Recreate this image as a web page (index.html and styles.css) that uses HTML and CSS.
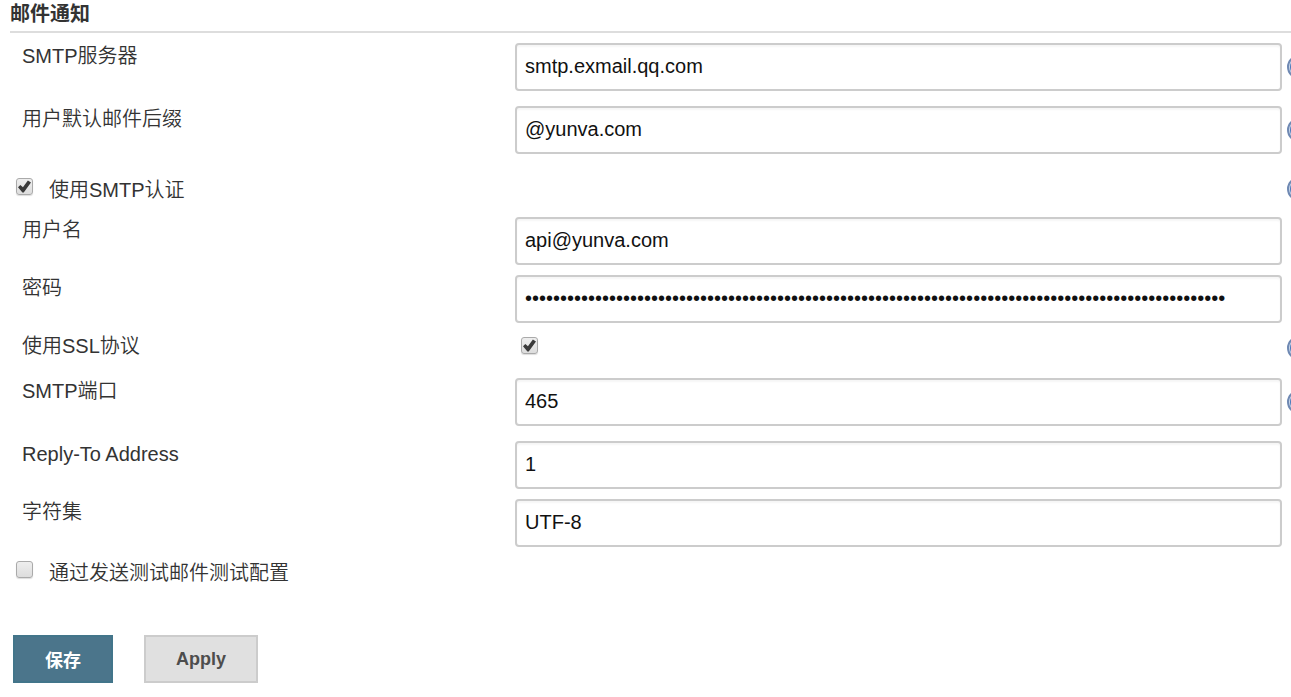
FILE: index.html
```
<!DOCTYPE html>
<html lang="zh-CN">
<head>
<meta charset="utf-8">
<meta name="viewport" content="width=device-width, initial-scale=1">
<title>邮件通知</title>
<link rel="stylesheet" href="styles.css">
</head>
<body>
<svg class="defs" width="0" height="0" aria-hidden="true">
  <symbol id="help" viewBox="0 0 24 24">
    <circle cx="12" cy="12" r="11" fill="#c9d8ec" stroke="#6f89b3" stroke-width="2"/>
    <circle cx="12" cy="12" r="9" fill="#4a78b8"/>
    <path d="M9 10a3 3 0 1 1 4 3l-1 1v1M12 17v2" fill="none" stroke="#fff" stroke-width="2"/>
  </symbol>
</svg>
<form class="section">
  <h1 class="title">邮件通知</h1>

  <div class="row row-help">
    <label class="label" for="server">SMTP服务器</label>
    <input class="input" id="server" type="text" value="smtp.exmail.qq.com">
    <button class="help" type="button" aria-label="SMTP服务器"><svg class="icon"><use href="#help"/></svg></button>
  </div>
  <div class="row row-help">
    <label class="label" for="suffix">用户默认邮件后缀</label>
    <input class="input" id="suffix" type="text" value="@yunva.com">
    <button class="help" type="button" aria-label="用户默认邮件后缀"><svg class="icon"><use href="#help"/></svg></button>
  </div>
  <div class="row row-auth">
    <div class="option">
      <input class="check" id="auth" type="checkbox" checked>
      <label for="auth">使用SMTP认证</label>
    </div>
    <button class="help" type="button" aria-label="使用SMTP认证"><svg class="icon"><use href="#help"/></svg></button>
  </div>
  <div class="row">
    <label class="label" for="user">用户名</label>
    <input class="input" id="user" type="text" value="api@yunva.com">
  </div>
  <div class="row">
    <label class="label" for="password">密码</label>
    <input class="input" id="password" type="password" value="0123456789012345678901234567890123456789012345678901234567890123456789012345678901234567890123456789">
  </div>
  <div class="row row-help row-ssl">
    <label class="label" for="ssl">使用SSL协议</label>
    <div class="cell"><input class="check" id="ssl" type="checkbox" checked></div>
    <button class="help" type="button" aria-label="使用SSL协议"><svg class="icon"><use href="#help"/></svg></button>
  </div>
  <div class="row row-help">
    <label class="label" for="port">SMTP端口</label>
    <input class="input" id="port" type="text" value="465">
    <button class="help" type="button" aria-label="SMTP端口"><svg class="icon"><use href="#help"/></svg></button>
  </div>
  <div class="row">
    <label class="label" for="reply">Reply-To Address</label>
    <input class="input" id="reply" type="text" value="1">
  </div>
  <div class="row">
    <label class="label" for="charset">字符集</label>
    <input class="input" id="charset" type="text" value="UTF-8">
  </div>
  <div class="row row-test">
    <div class="option">
      <input class="check" id="test" type="checkbox">
      <label for="test">通过发送测试邮件测试配置</label>
    </div>
  </div>

  <div class="actions">
    <button class="button primary" type="submit">保存</button>
    <button class="button" type="button">Apply</button>
  </div>
</form>
</body>
</html>
```
FILE: styles.css
```
* {
  box-sizing: border-box;
}

body {
  margin: 0;
  overflow-x: hidden;
  background: #fff;
  color: #333;
  font-family: "Liberation Sans", "Noto Sans CJK SC", sans-serif;
  font-size: 20px;
  font-weight: 350;
  line-height: 26px;
}

.defs {
  position: absolute;
}

.section {
  padding-left: 10px;
}

.title {
  margin: 0 0 10px;
  padding: 1px 0 4px;
  border-bottom: 2px solid #ddd;
  font-size: 20px;
  font-weight: 700;
  line-height: 26px;
}

.row {
  display: grid;
  grid-template-columns: 505fr 767fr 9px;
  align-items: start;
  margin-bottom: 10px;
}

.row-help {
  margin-bottom: 15px;
}

.row-auth {
  padding-top: 8px;
  min-height: 38px;
}

.row-ssl {
  min-height: 30px;
}

.row-test {
  padding-top: 3px;
}

.label {
  padding-left: 12px;
}

.option {
  display: flex;
  grid-column: 1 / 3;
  gap: 16px;
  padding-left: 6px;
}

.cell {
  display: flex;
  padding: 4px 6px;
}

.input {
  width: 100%;
  height: 48px;
  padding: 0 8px 2px;
  border: 2px solid #ccc;
  border-radius: 4px;
  background: #fff;
  box-shadow: inset 0 2px 2px #f6f6f6;
  color: #111;
  font-family: inherit;
  font-size: 20px;
}

.check {
  appearance: none;
  display: grid;
  flex: none;
  width: 17px;
  height: 17px;
  margin: 1px 0 0;
  border: 1px solid #aaa;
  border-radius: 3px;
  background: linear-gradient(#eee, #ddd);
  box-shadow: 0 1px 1px #ddd;
}

.cell .check {
  margin-top: 0;
}

.check:checked::before {
  content: "";
  margin: 1px;
  background: #3a3a3a;
  clip-path: polygon(0 55%, 18% 38%, 38% 56%, 76% 4%, 100% 20%, 44% 96%, 34% 96%);
}

.help {
  align-self: center;
  width: 24px;
  height: 24px;
  margin-left: 5px;
  padding: 0;
  border: 0;
  background: none;
}

.row-auth .help {
  align-self: start;
}

.icon {
  display: block;
  width: 24px;
  height: 24px;
}

.actions {
  display: flex;
  gap: 31px;
  padding: 39px 3px 14px;
}

.button {
  height: 48px;
  padding: 0 30px;
  border: 2px solid #ccc;
  background: #e0e0e0;
  color: #4d4d4d;
  font-family: inherit;
  font-size: 18px;
  font-weight: 700;
}

.primary {
  border-color: #42758a;
  background: #4b758b;
  color: #fff;
}
```
